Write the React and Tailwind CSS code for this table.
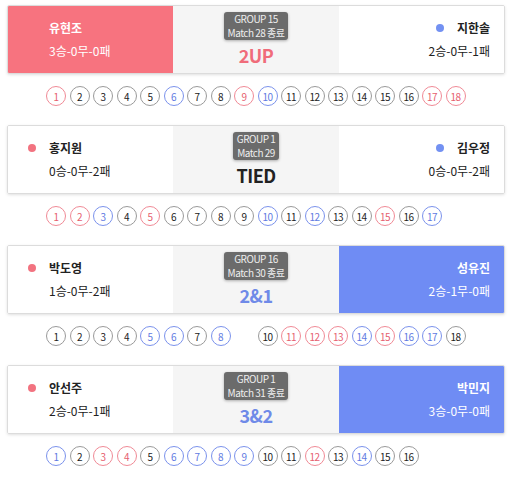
const matches = [
  {
    left: { name: "유현조", record: "3승-0무-0패" },
    right: { name: "지한솔", record: "2승-0무-1패" },
    winner: "left",
    group: "GROUP 15",
    match: "Match 28 종료",
    score: "2UP",
    holes: "rggggbggrbggggggrr",
  },
  {
    left: { name: "홍지원", record: "0승-0무-2패" },
    right: { name: "김우정", record: "0승-0무-2패" },
    winner: null,
    group: "GROUP 1",
    match: "Match 29",
    score: "TIED",
    holes: "rrbgrggggbgbggrgb",
  },
  {
    left: { name: "박도영", record: "1승-0무-2패" },
    right: { name: "성유진", record: "2승-1무-0패" },
    winner: "right",
    group: "GROUP 16",
    match: "Match 30 종료",
    score: "2&1",
    holes: "ggggbbgb-grrrbrbbg",
  },
  {
    left: { name: "안선주", record: "2승-0무-1패" },
    right: { name: "박민지", record: "3승-0무-0패" },
    winner: "right",
    group: "GROUP 1",
    match: "Match 31 종료",
    score: "3&2",
    holes: "bgrrgbbbbggrgbgg",
  },
];

const holeStyle = {
  r: "border-[#f08a96] text-[#e6606f]",
  b: "border-[#7b92ec] text-[#5f7be2]",
  g: "border-[#9a9a9a] text-[#222]",
};

function Holes({ holes }) {
  return (
    <div className="w-[420px] ml-[46px] flex gap-[3.5px] h-[21px]">
      {holes.split("").map((c, i) =>
        c === "-" ? (
          <div key={i} className="w-[20px] h-[20px] shrink-0" />
        ) : (
          <div
            key={i}
            className={`w-[20px] h-[20px] shrink-0 rounded-full border bg-white flex items-center justify-center text-[10px] tracking-[-0.5px] ${holeStyle[c]}`}
          >
            {i + 1}
          </div>
        )
      )}
    </div>
  );
}

function Side({ player, side, win }) {
  const isLeft = side === "left";
  const bg = win ? (isLeft ? "bg-[#f7737f]" : "bg-[#6f8cf4]") : "bg-white";
  const dot = isLeft ? "bg-[#f27380]" : "bg-[#7391f2]";
  const textColor = win ? "text-white" : "text-[#222]";
  return (
    <div
      className={`w-[166px] h-full flex flex-col justify-center ${bg} ${
        isLeft ? "pl-[20px] items-start" : "pr-[14px] items-end"
      }`}
    >
      <div className="flex items-center gap-[13px]">
        {isLeft && <span className={`w-[8px] h-[8px] rounded-full ${win ? "invisible" : dot}`} />}
        {!isLeft && !win && <span className={`w-[8px] h-[8px] rounded-full ${dot}`} />}
        <span className={`text-[12px] font-bold leading-[16px] ${textColor}`}>{player.name}</span>
      </div>
      <div className={`mt-[7px] text-[12px] leading-[16px] ${textColor} ${isLeft ? "pl-[21px]" : ""}`}>
        {player.record}
      </div>
    </div>
  );
}

function MatchCard({ m }) {
  const scoreColor =
    m.winner === "left" ? "text-[#f06c7a]" : m.winner === "right" ? "text-[#6f8ae8]" : "text-[#222]";
  return (
    <div className="w-[498px] h-[69px] ml-[7px] border border-[#dcdcdc] rounded-[2px] shadow-[0_1px_3px_rgba(0,0,0,0.12)] flex overflow-hidden">
      <Side player={m.left} side="left" win={m.winner === "left"} />
      <div className="w-[166px] h-full bg-[#f5f5f5] flex flex-col items-center pt-[6px]">
        <div className="bg-[#6b6b6b] rounded-[3px] shadow-[0_1px_3px_rgba(0,0,0,0.3)] px-[4px] text-[10px] leading-[14px] text-[#eee] text-center tracking-[-0.5px]">
          <div>{m.group}</div>
          <div>{m.match}</div>
        </div>
        <div className={`mt-[4px] text-[18px] font-bold leading-[22px] tracking-[-0.5px] ${scoreColor}`}>
          {m.score}
        </div>
      </div>
      <Side player={m.right} side="right" win={m.winner === "right"} />
    </div>
  );
}

export default function App() {
  return (
    <div
      className="w-[509px] min-h-[479px] bg-white pt-[5px]"
      style={{ fontFamily: '"Noto Sans CJK KR", "Noto Sans", sans-serif' }}
    >
      {matches.map((m, i) => (
        <div key={i} className="h-[120px]">
          <MatchCard m={m} />
          <div className="mt-[12px]">
            <Holes holes={m.holes} />
          </div>
        </div>
      ))}
    </div>
  );
}
